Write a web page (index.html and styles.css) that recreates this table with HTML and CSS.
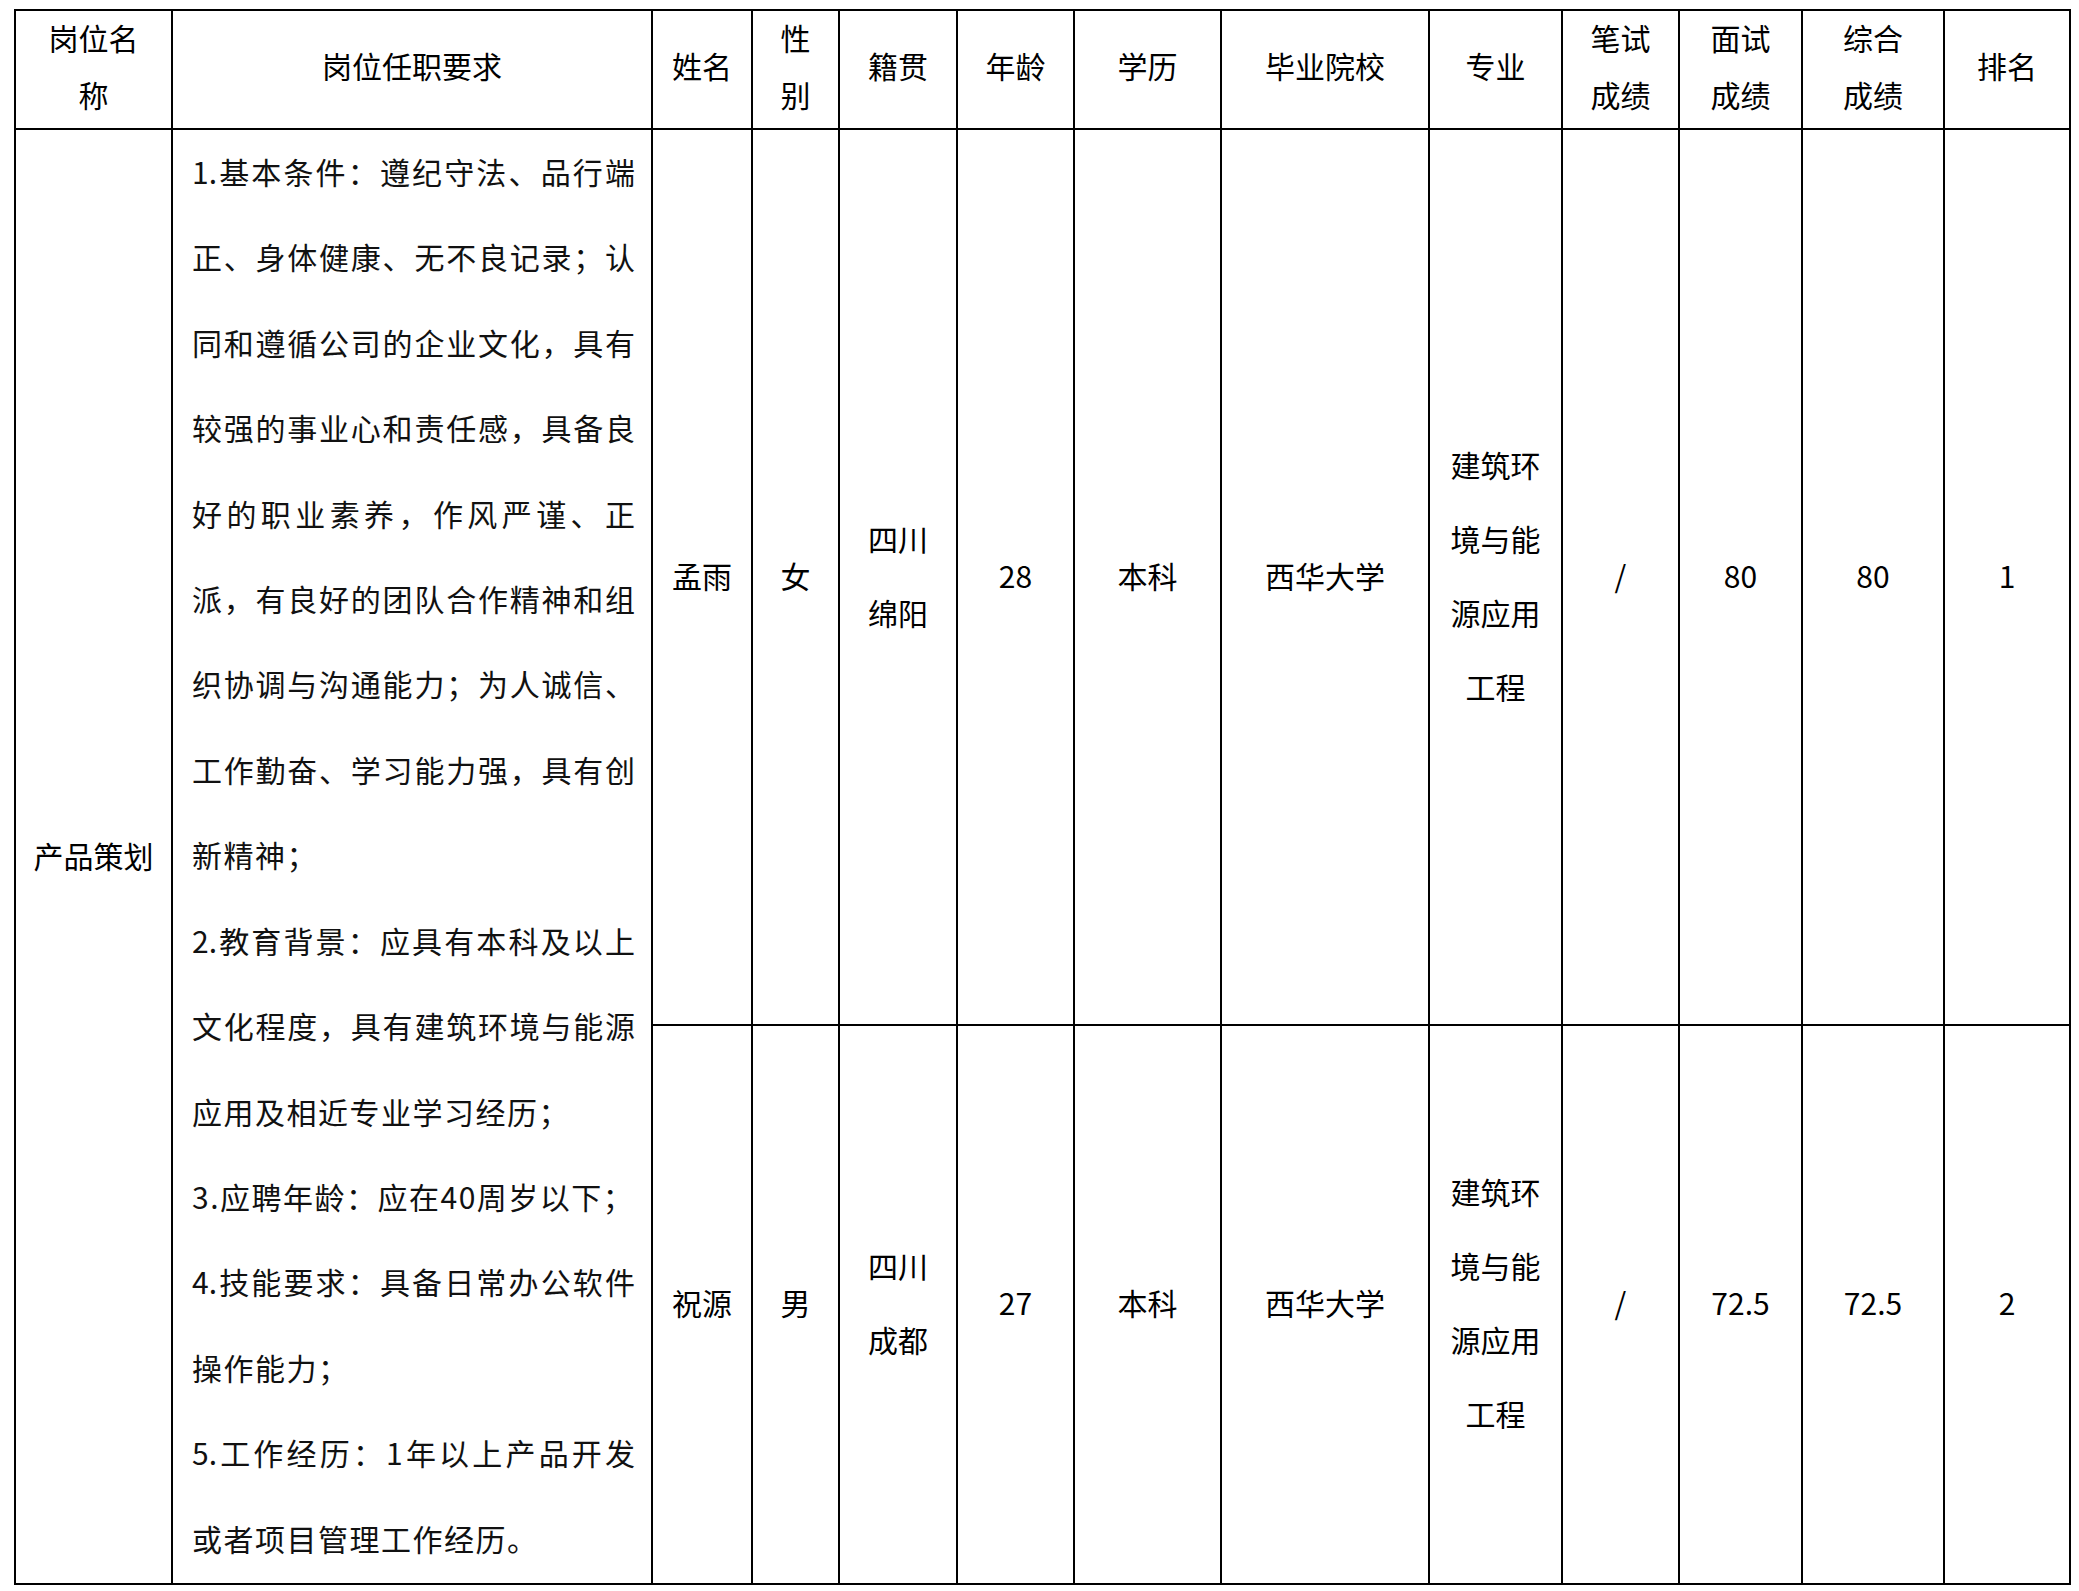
FILE: index.html
```html
<!DOCTYPE html>
<html lang="zh-CN">
<head>
<meta charset="utf-8">
<title>岗位拟录用人员名单</title>
<link rel="stylesheet" href="styles.css">
</head>
<body>
<div class="sheet">
  <div class="c h">岗位名<br>称</div>
  <div class="c h">岗位任职要求</div>
  <div class="c h">姓名</div>
  <div class="c h">性<br>别</div>
  <div class="c h">籍贯</div>
  <div class="c h">年龄</div>
  <div class="c h">学历</div>
  <div class="c h">毕业院校</div>
  <div class="c h">专业</div>
  <div class="c h">笔试<br>成绩</div>
  <div class="c h">面试<br>成绩</div>
  <div class="c h">综合<br>成绩</div>
  <div class="c h">排名</div>

  <div class="c post">产品策划</div>
  <div class="req">
    <div class="ln full">1.基本条件：遵纪守法、品行端</div>
    <div class="ln full">正、身体健康、无不良记录；认</div>
    <div class="ln full">同和遵循公司的企业文化，具有</div>
    <div class="ln full">较强的事业心和责任感，具备良</div>
    <div class="ln full">好的职业素养，作风严谨、正</div>
    <div class="ln full">派，有良好的团队合作精神和组</div>
    <div class="ln full">织协调与沟通能力；为人诚信、</div>
    <div class="ln full">工作勤奋、学习能力强，具有创</div>
    <div class="ln">新精神；</div>
    <div class="ln full">2.教育背景：应具有本科及以上</div>
    <div class="ln full">文化程度，具有建筑环境与能源</div>
    <div class="ln">应用及相近专业学习经历；</div>
    <div class="ln">3.应聘年龄：应在40周岁以下；</div>
    <div class="ln full">4.技能要求：具备日常办公软件</div>
    <div class="ln">操作能力；</div>
    <div class="ln full">5.工作经历：1年以上产品开发</div>
    <div class="ln">或者项目管理工作经历。</div>
  </div>

  <div class="c d">孟雨</div>
  <div class="c d">女</div>
  <div class="c d">四川<br>绵阳</div>
  <div class="c d">28</div>
  <div class="c d">本科</div>
  <div class="c d">西华大学</div>
  <div class="c d">建筑环<br>境与能<br>源应用<br>工程</div>
  <div class="c d">/</div>
  <div class="c d">80</div>
  <div class="c d">80</div>
  <div class="c d">1</div>

  <div class="c d r2">祝源</div>
  <div class="c d r2">男</div>
  <div class="c d r2">四川<br>成都</div>
  <div class="c d r2">27</div>
  <div class="c d r2">本科</div>
  <div class="c d r2">西华大学</div>
  <div class="c d r2">建筑环<br>境与能<br>源应用<br>工程</div>
  <div class="c d r2">/</div>
  <div class="c d r2">72.5</div>
  <div class="c d r2">72.5</div>
  <div class="c d r2">2</div>
</div>
</body>
</html>
```

FILE: styles.css
```css
html, body {
  margin: 0;
  background: #fff;
}

body {
  padding: 9px 0 0 14px;
  font-family: "Noto Sans CJK SC", "Noto Sans", sans-serif;
  color: #000;
}

.sheet {
  display: grid;
  grid-template-columns: 155px 478px 98px 85px 116px 115px 145px 206px 131px 115px 121px 140px 124px;
  grid-template-rows: 117px 894px 557px;
  gap: 2px;
  padding: 2px;
  background: #000;
  width: max-content;
}

.c {
  background: #fff;
  display: flex;
  align-items: center;
  justify-content: center;
  text-align: center;
  font-size: 30px;
}

.h {
  line-height: 57px;
  padding-bottom: 8px;
}

.d {
  line-height: 74px;
  grid-row: 2;
  padding-bottom: 5px;
}

.d.r2 {
  grid-row: 3;
}

.post {
  grid-column: 1;
  grid-row: 2 / 4;
  padding-bottom: 4px;
}

.req {
  grid-column: 2;
  grid-row: 2 / 4;
  background: #fff;
  display: flex;
  flex-direction: column;
  justify-content: center;
  padding: 0 16px 3px 19px;
  font-size: 30px;
  color: #111;
}

.ln {
  line-height: 85.4px;
  white-space: nowrap;
  letter-spacing: 1.5px;
}

.ln.full {
  letter-spacing: 0;
  text-align: justify;
  text-align-last: justify;
}
```
